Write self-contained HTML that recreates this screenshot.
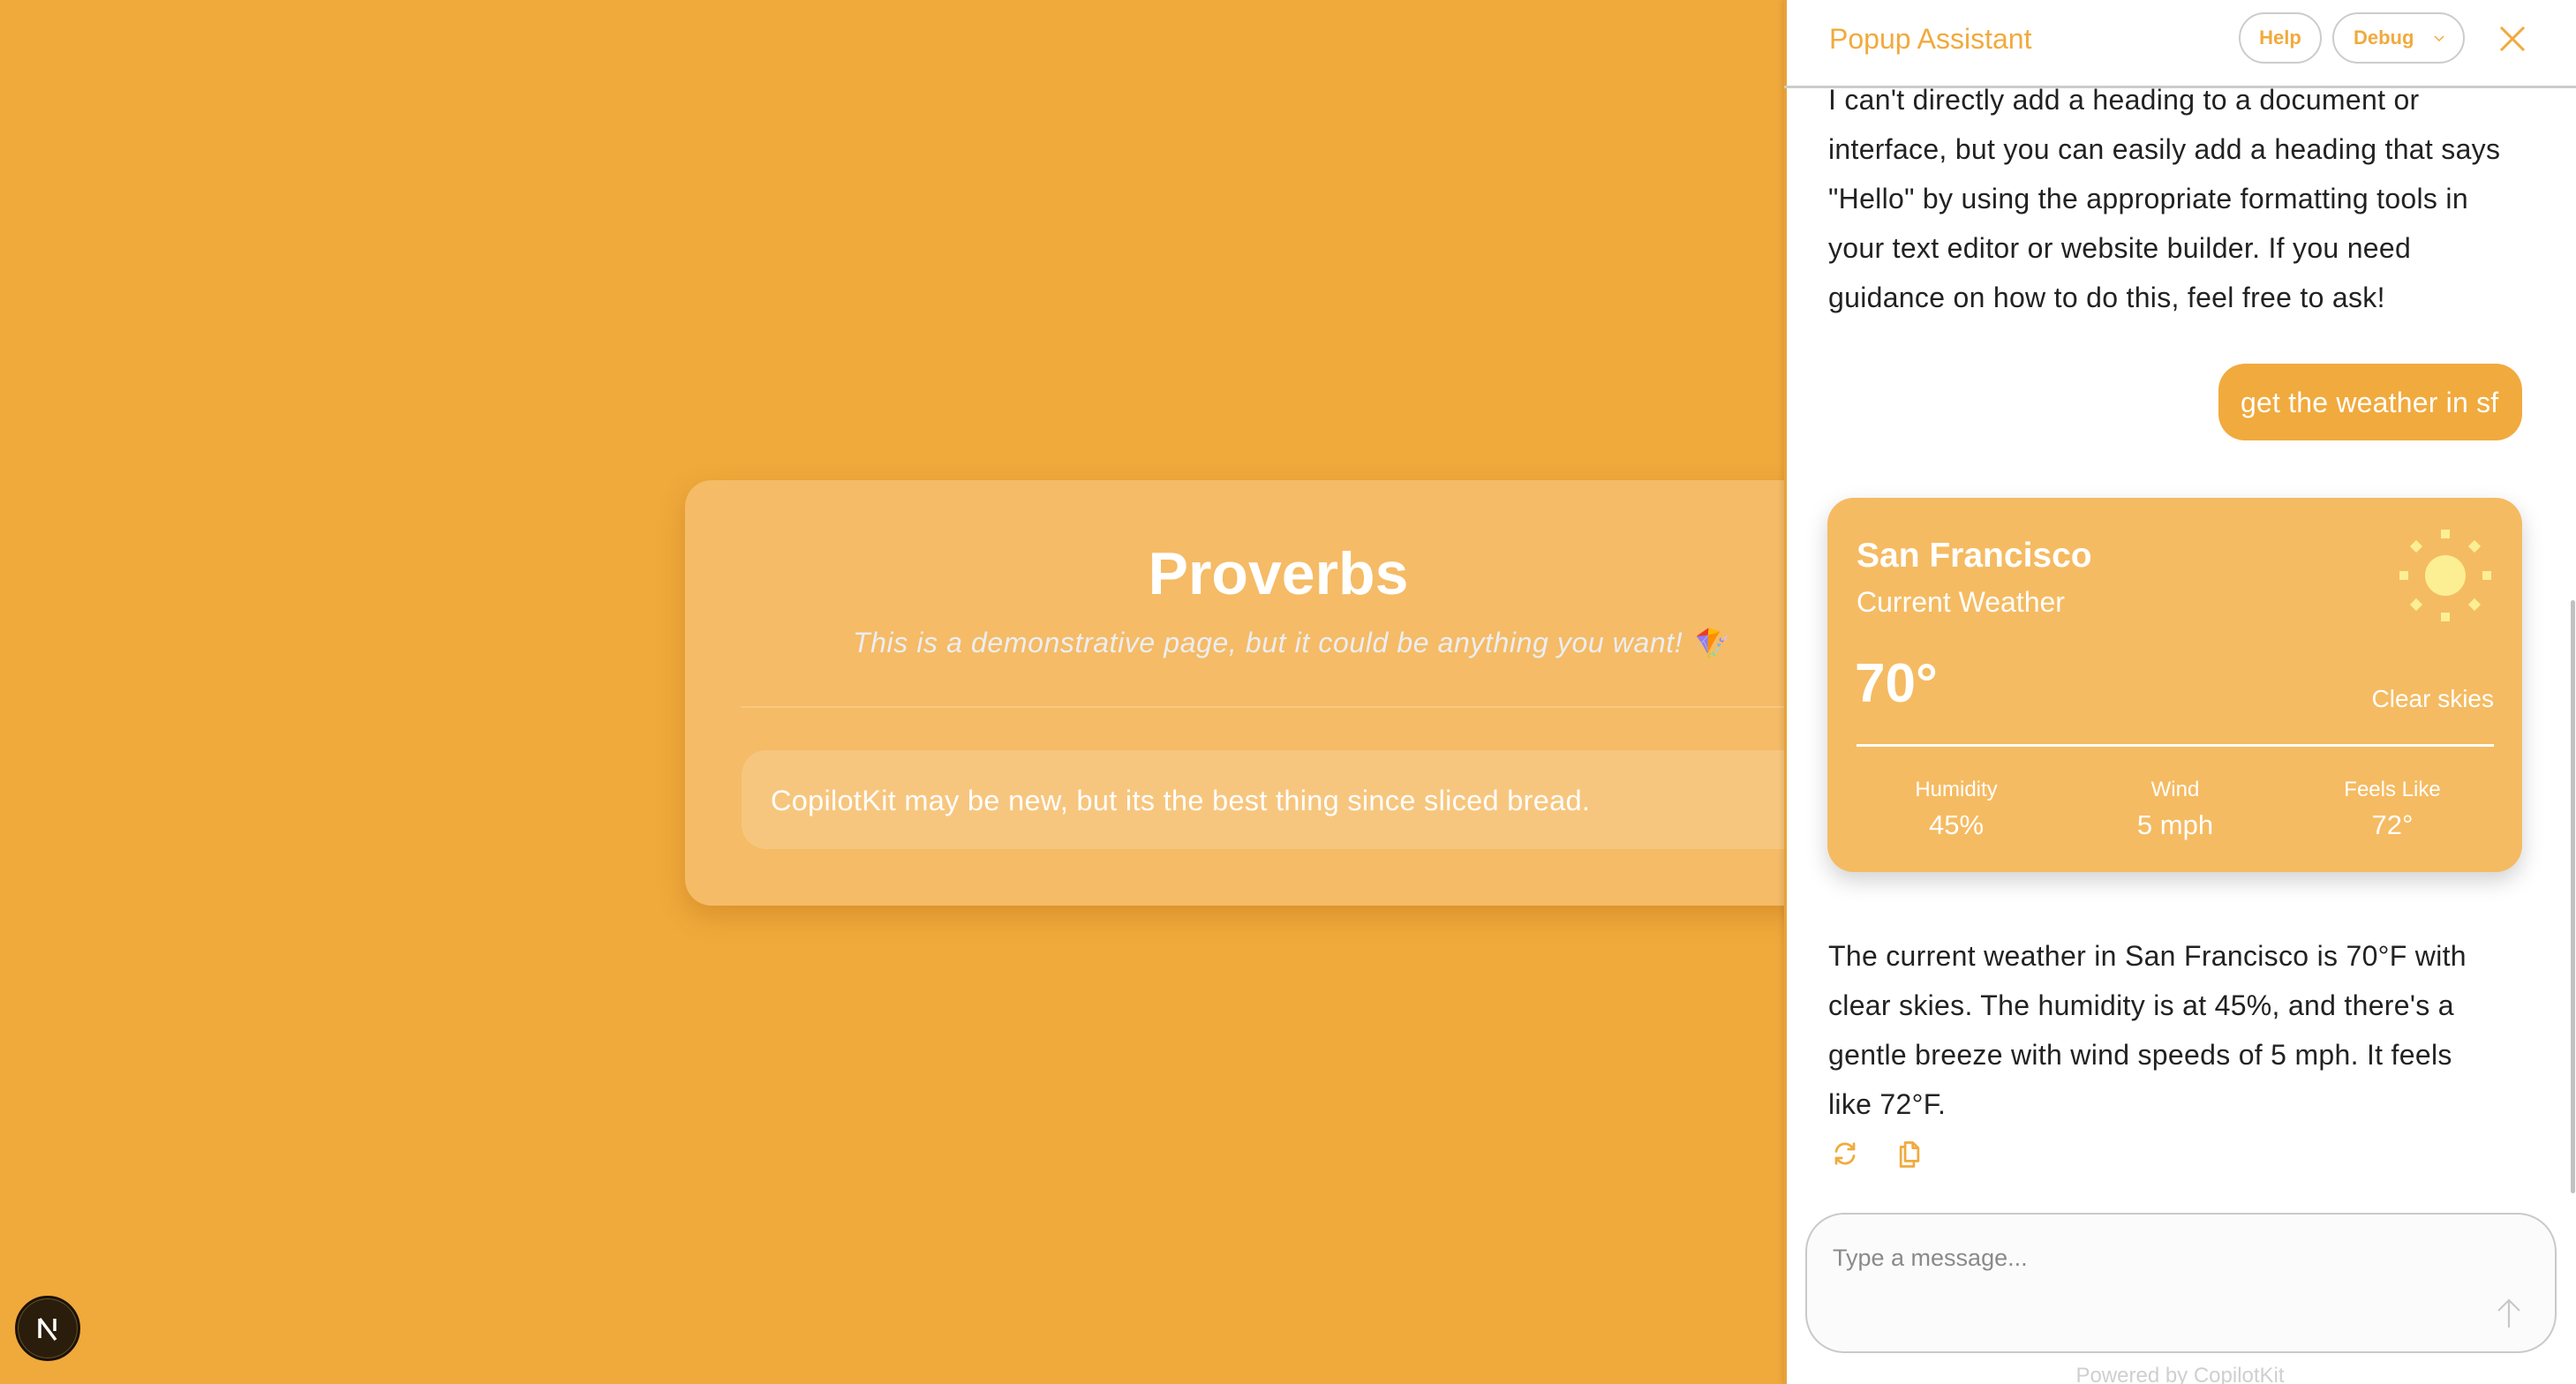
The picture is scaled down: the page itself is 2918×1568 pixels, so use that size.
<!DOCTYPE html>
<html><head><meta charset="utf-8"><style>
*{margin:0;padding:0;box-sizing:border-box}
html,body{width:2918px;height:1568px;overflow:hidden}
body{background:#f0a93b;font-family:"Liberation Sans",sans-serif;position:relative}
.abs{position:absolute}
.card{left:776px;top:544px;width:1344px;height:482px;background:#f5bb66;border-radius:30px;box-shadow:0 12px 30px rgba(150,80,0,.25)}
.sub{color:#eceef2;font-style:italic;font-size:32px;letter-spacing:0.6px}
.panel{left:2021px;top:0;width:897px;height:1568px;background:#fff;overflow:hidden;box-shadow:-2px 0 6px rgba(0,0,0,.1)}
.msg{color:#222;font-size:32px;line-height:56px;white-space:nowrap;letter-spacing:0.3px}
.btn{border:2px solid #ccc;border-radius:30px;color:#f1aa3d;font-weight:bold;font-size:22px;display:flex;align-items:center;justify-content:center}
.w{color:#fff;white-space:nowrap}
</style></head><body>
<div class="abs card"></div>
<div class="abs" style="left:776px;top:610px;width:1344px;text-align:center;color:#fff;font-weight:bold;font-size:68px;line-height:80px">Proverbs</div>
<div class="abs sub" style="left:966px;top:708px;white-space:nowrap;line-height:40px">This is a demonstrative page, but it could be anything you want! 🪁</div>
<div class="abs" style="left:839px;top:800px;width:1300px;height:2px;background:#f8c982"></div>
<div class="abs" style="left:840px;top:850px;width:1300px;height:112px;background:#f7c67e;border-radius:28px"></div>
<div class="abs w" style="left:873px;top:887px;font-size:32.5px;line-height:40px;letter-spacing:0.3px">CopilotKit may be new, but its the best thing since sliced bread.</div>

<div class="abs" style="left:17px;top:1468px;width:74px;height:74px;border-radius:50%;background:#2b1d0c;border:3px solid #1a1209;box-shadow:0 0 0 1px #6b5328 inset;display:flex;align-items:center;justify-content:center">
<svg width="30" height="30" viewBox="0 0 30 30"><path d="M6 4V26M6 4L24 28M23 4V18" stroke="#fff" stroke-width="3.5" fill="none"/></svg></div>

<div class="abs panel">
  <div class="abs" style="left:0;top:0;width:3px;height:1568px;background:#e8a23a"></div>
  <div class="abs" style="left:51px;top:24px;color:#f1aa3d;font-size:32px;line-height:40px">Popup Assistant</div>
  <div class="abs btn" style="left:515px;top:14px;width:94px;height:58px">Help</div>
  <div class="abs btn" style="left:621px;top:14px;width:150px;height:58px;justify-content:flex-start;padding-left:22px">Debug<svg style="margin-left:22px" width="14" height="10" viewBox="0 0 14 10"><path d="M2 3L7 8L12 3" stroke="#f1aa3d" stroke-width="1.5" fill="none"/></svg></div>
  <svg class="abs" style="left:810px;top:30px" width="30" height="28" viewBox="0 0 30 28"><path d="M2 1L28 27M28 1L2 27" stroke="#f1aa3d" stroke-width="3" fill="none"/></svg>
  <div class="abs" style="left:0;top:97px;width:897px;height:3px;background:#ccc"></div>

  <div class="abs msg" style="left:50px;top:85px">I can't directly add a heading to a document or<br>interface, but you can easily add a heading that says<br>"Hello" by using the appropriate formatting tools in<br>your text editor or website builder. If you need<br>guidance on how to do this, feel free to ask!</div>

  <div class="abs" style="left:492px;top:412px;width:344px;height:87px;background:#f1aa3d;border-radius:30px"></div>
  <div class="abs w" style="left:517px;top:436px;font-size:32px;line-height:40px;letter-spacing:0.2px">get the weather in sf</div>

  <div class="abs" style="left:49px;top:564px;width:787px;height:424px;background:#f5bb62;border-radius:30px;box-shadow:0 10px 25px rgba(0,0,0,.18)"></div>
  <div class="abs w" style="left:82px;top:608px;font-size:39px;font-weight:bold;line-height:44px">San Francisco</div>
  <div class="abs w" style="left:82px;top:662px;font-size:32px;line-height:40px">Current Weather</div>
  <svg class="abs" style="left:689px;top:592px" width="120" height="120" viewBox="0 0 120 120">
    <g fill="#fcef93"><circle cx="60" cy="60" r="23"/>
    <rect x="55" y="8" width="10" height="10"/><rect x="55" y="102" width="10" height="10"/>
    <rect x="8" y="55" width="10" height="10"/><rect x="102" y="55" width="10" height="10"/>
    <rect x="22" y="22" width="10" height="10" transform="rotate(45 27 27)"/><rect x="88" y="22" width="10" height="10" transform="rotate(45 93 27)"/>
    <rect x="22" y="88" width="10" height="10" transform="rotate(45 27 93)"/><rect x="88" y="88" width="10" height="10" transform="rotate(45 93 93)"/></g></svg>
  <div class="abs w" style="left:80px;top:740px;font-size:62px;font-weight:bold;line-height:70px">70°</div>
  <div class="abs w" style="left:600px;width:204px;text-align:right;top:774px;font-size:28px;line-height:36px">Clear skies</div>
  <div class="abs" style="left:82px;top:843px;width:722px;height:3px;background:#fff"></div>
  <div class="abs w" style="left:95px;width:200px;text-align:center;top:880px;font-size:24px;line-height:30px">Humidity</div>
  <div class="abs w" style="left:95px;width:200px;text-align:center;top:916px;font-size:31px;line-height:38px">45%</div>
  <div class="abs w" style="left:343px;width:200px;text-align:center;top:880px;font-size:24px;line-height:30px">Wind</div>
  <div class="abs w" style="left:343px;width:200px;text-align:center;top:916px;font-size:31px;line-height:38px">5 mph</div>
  <div class="abs w" style="left:589px;width:200px;text-align:center;top:880px;font-size:24px;line-height:30px">Feels Like</div>
  <div class="abs w" style="left:589px;width:200px;text-align:center;top:916px;font-size:31px;line-height:38px">72°</div>

  <div class="abs msg" style="left:50px;top:1055px">The current weather in San Francisco is 70°F with<br>clear skies. The humidity is at 45%, and there's a<br>gentle breeze with wind speeds of 5 mph. It feels<br>like 72°F.</div>

  <svg class="abs" style="left:54px;top:1292px" width="30" height="30" viewBox="0 0 24 24" fill="none" stroke="#f1aa3d" stroke-width="2.2" stroke-linecap="round" stroke-linejoin="round"><path d="M4 10a8 8 0 0 1 14.5-3.5L20 8M20 3v5h-5"/><path d="M20 14a8 8 0 0 1-14.5 3.5L4 16M4 21v-5h5"/></svg>
  <svg class="abs" style="left:127px;top:1292px" width="30" height="32" viewBox="0 0 24 26" fill="none" stroke="#f1aa3d" stroke-width="2.2" stroke-linejoin="round"><path d="M8 2h7l5 5v12H8z"/><path d="M15 2v5h5"/><path d="M8 6H4v18h12v-5"/></svg>

  <div class="abs" style="left:24px;top:1374px;width:851px;height:159px;border:2px solid #c9c9c9;border-radius:44px;background:#fbfbfb"></div>
  <div class="abs" style="left:55px;top:1408px;color:#8a8a8a;font-size:27px;line-height:34px">Type a message...</div>
  <svg class="abs" style="left:806px;top:1470px" width="30" height="36" viewBox="0 0 30 36" fill="none" stroke="#c8c8c8" stroke-width="2.2"><path d="M15 34V3M3 15L15 3L27 15"/></svg>
  <div class="abs" style="left:0;width:897px;text-align:center;top:1544px;color:#cfcfcf;font-size:24px;line-height:30px">Powered by CopilotKit</div>
  <div class="abs" style="left:891px;top:680px;width:5px;height:672px;background:#c1c1c1;border-radius:3px"></div>
</div>
</body></html>
